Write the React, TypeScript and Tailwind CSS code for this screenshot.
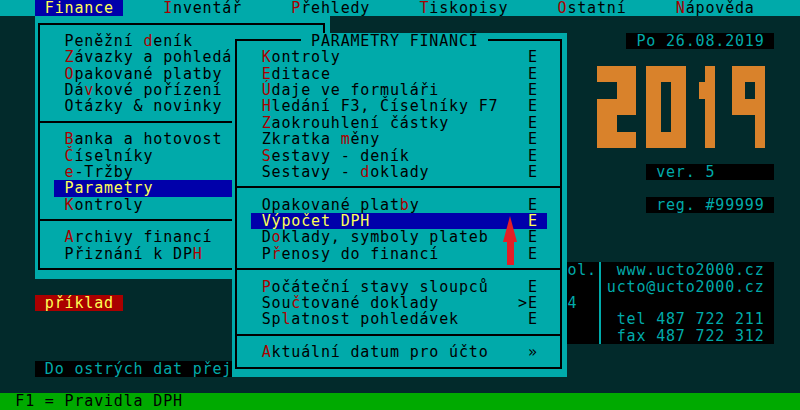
import React from "react";

type Fg = "k" | "r" | "y" | "c";
type Bg = "t" | "d" | "k" | "b" | "r" | "g";
type Cell = { ch: string; fg: Fg; bg: Bg };

const fgCls: Record<Fg, string> = {
  k: "text-black",
  r: "text-[#aa0000]",
  y: "text-[#ffff55]",
  c: "text-[#00aaaa]",
};

const bgCls: Record<Bg, string> = {
  t: "bg-[#00aaaa]",
  d: "bg-[#022a2b]",
  k: "bg-black",
  b: "bg-[#0000aa]",
  r: "bg-[#aa0000]",
  g: "bg-[#00aa00]",
};

const COLS = 80;
const ROWS = 25;

function makeScreen() {
  const s: Cell[][] = [];
  for (let r = 0; r < ROWS; r++) {
    const row: Cell[] = [];
    for (let c = 0; c < COLS; c++) {
      const bg: Bg = r === 0 ? "t" : r === 24 ? "g" : "d";
      row.push({ ch: " ", fg: "k", bg });
    }
    s.push(row);
  }

  const fill = (r0: number, r1: number, c0: number, c1: number, bg: Bg) => {
    for (let r = r0; r <= r1; r++)
      for (let c = c0; c <= c1; c++) s[r][c] = { ch: " ", fg: "k", bg };
  };

  // "~x" marks a hotkey letter, drawn in red unless hot is off
  const put = (r: number, c: number, str: string, fg: Fg, hot = true) => {
    let col = c;
    let mark = false;
    for (const ch of Array.from(str)) {
      if (ch === "~") {
        mark = true;
        continue;
      }
      s[r][col] = { ch, fg: mark && hot ? "r" : fg, bg: s[r][col].bg };
      mark = false;
      col++;
    }
  };

  const set = (r: number, c: number, ch: string, fg: Fg) => {
    s[r][c] = { ch, fg, bg: s[r][c].bg };
  };

  const box = (r0: number, r1: number, c0: number, c1: number) => {
    for (let c = c0 + 1; c < c1; c++) {
      set(r0, c, "─", "k");
      set(r1, c, "─", "k");
    }
    for (let r = r0 + 1; r < r1; r++) {
      set(r, c0, "│", "k");
      set(r, c1, "│", "k");
    }
    set(r0, c0, "┌", "k");
    set(r0, c1, "┐", "k");
    set(r1, c0, "└", "k");
    set(r1, c1, "┘", "k");
  };

  const sep = (r: number, c0: number, c1: number) => {
    set(r, c0, "├", "k");
    for (let c = c0 + 1; c < c1; c++) set(r, c, "─", "k");
    set(r, c1, "┤", "k");
  };

  // menu bar
  fill(0, 0, 3, 11, "b");
  put(0, 4, "Finance", "y", false);
  put(0, 16, "~Inventář", "k");
  put(0, 29, "~Přehledy", "k");
  put(0, 42, "~Tiskopisy", "k");
  put(0, 56, "~Ostatní", "k");
  put(0, 68, "~Nápověda", "k");

  // right side panels
  fill(2, 2, 63, 77, "k");
  put(2, 64, "Po 26.08.2019", "c");
  fill(10, 10, 65, 77, "k");
  put(10, 66, "ver. 5", "c");
  fill(12, 12, 65, 77, "k");
  put(12, 66, "reg. #99999", "c");
  fill(16, 20, 48, 77, "k");
  put(16, 55, "škol.", "c");
  put(18, 57, "4", "c");
  for (let r = 16; r <= 20; r++) set(r, 60, "│", "c");
  put(16, 62, "www.ucto2000.cz", "c");
  put(17, 61, "ucto@ucto2000.cz", "c");
  put(19, 62, "tel 487 722 211", "c");
  put(20, 62, "fax 487 722 312", "c");

  // left side labels
  fill(18, 18, 3, 11, "r");
  put(18, 4, "příklad", "y");
  fill(22, 22, 3, 40, "k");
  put(22, 4, "Do ostrých dat přejít", "c");

  // status line
  put(24, 1, "F1 = Pravidla DPH", "k");

  // Finance dropdown
  fill(1, 16, 3, 32, "t");
  box(1, 16, 3, 32);
  put(2, 6, "Peněžní ~deník", "k");
  put(3, 6, "~Závazky a pohledávky", "k");
  put(4, 6, "~Opakované platby", "k");
  put(5, 6, "Dá~vkové pořízení", "k");
  put(6, 6, "Otázky & novinky", "k");
  sep(7, 3, 32);
  put(8, 6, "~Banka a hotovost", "k");
  put(9, 6, "~Číselníky", "k");
  put(10, 6, "~e-Tržby", "k");
  fill(11, 11, 5, 22, "b");
  put(11, 6, "Parametry", "y", false);
  put(12, 6, "~Kontroly", "k");
  sep(13, 3, 32);
  put(14, 6, "~Archivy financí", "k");
  put(15, 6, "Přiznání k DP~H", "k");

  // Parametry submenu
  fill(2, 22, 23, 56, "t");
  box(2, 22, 23, 56);
  put(2, 30, " PARAMETRY FINANCÍ ", "k");
  const items: [number, string, string][] = [
    [3, "~Kontroly", "E"],
    [4, "~Editace", "E"],
    [5, "~Údaje ve formuláři", "E"],
    [6, "~Hledání F3, Číselníky F7", "E"],
    [7, "~Zaokrouhlení částky", "E"],
    [8, "Zkratka ~měny", "E"],
    [9, "~Sestavy - deník", "E"],
    [10, "Sestavy - ~doklady", "E"],
    [12, "Opakované plat~by", "E"],
    [14, "D~oklady, symboly plateb", "E"],
    [15, "P~řenosy do financí", "E"],
    [17, "~Počáteční stavy sloupců", "E"],
    [18, "Sou~čtované doklady", ">E"],
    [19, "Sp~latnost pohledávek", "E"],
    [21, "~Aktuální datum pro účto", "»"],
  ];
  for (const [r, label, key] of items) {
    put(r, 26, label, "k");
    put(r, 54 - Array.from(key).length, key, "k");
  }
  sep(11, 23, 56);
  sep(16, 23, 56);
  sep(20, 23, 56);
  fill(13, 13, 25, 54, "b");
  put(13, 26, "Výpočet DPH", "y", false);
  put(13, 53, "E", "y", false);

  return s;
}

const screen = makeScreen();

// which arms a frame glyph has
const frame: Record<string, { l?: 1; r?: 1; u?: 1; d?: 1 }> = {
  "─": { l: 1, r: 1 },
  "│": { u: 1, d: 1 },
  "┌": { r: 1, d: 1 },
  "┐": { l: 1, d: 1 },
  "└": { r: 1, u: 1 },
  "┘": { l: 1, u: 1 },
  "├": { u: 1, d: 1, r: 1 },
  "┤": { u: 1, d: 1, l: 1 },
};

function FrameCell({ ch }: { ch: string }) {
  const f = frame[ch];
  return (
    <span className="grid h-full w-full grid-cols-2 grid-rows-2">
      <span className={`${f.l ? "border-b-2" : ""} ${f.u ? "border-r-2" : ""}`} />
      <span className={`${f.r ? "border-b-2" : ""} ${f.u ? "-ml-[2px]" : ""}`} />
      <span className={`${f.d ? "-mt-[2px] border-r-2" : ""}`} />
      <span />
    </span>
  );
}

function Logo() {
  // block digits; one unit is half a text cell wide and half a row tall
  const rects: [number, number, number, number][] = [
    // 2
    [0, 0, 8, 2],
    [4, 2, 4, 2],
    [0, 4, 8, 2],
    [0, 6, 4, 2],
    [0, 8, 8, 2],
    // 0
    [10, 0, 8, 2],
    [10, 2, 3, 6],
    [15, 2, 3, 6],
    [10, 8, 8, 2],
    // 1
    [22, 0, 2, 10],
    [20.6, 2, 1.4, 2],
    // 9
    [27.4, 0, 6.6, 2],
    [27.4, 2, 2.6, 2],
    [32, 2, 2, 8],
    [27.4, 4, 6.6, 2],
  ];
  return (
    <svg
      className="pointer-events-none absolute left-[596.6px] top-[65.6px] h-[82px] w-[177.5px]"
      viewBox="0 0 36 10"
      preserveAspectRatio="none"
    >
      {rects.map(([x, y, w, h], i) => (
        <rect key={i} x={x} y={y} width={w} height={h} fill="#d9822b" shapeRendering="crispEdges" />
      ))}
    </svg>
  );
}

function Arrow() {
  return (
    <svg className="pointer-events-none absolute left-[500px] top-[214px] h-[54px] w-[20px]" viewBox="0 0 20 54">
      <polygon points="10,2 17,28 14,28 14,51 7,51 7,28 3,28" fill="#e41e26" />
    </svg>
  );
}

export default function App() {
  return (
    <div className="relative h-[410px] w-[800px] overflow-hidden bg-[#022a2b] font-['DejaVu_Sans_Mono',monospace] text-[15px] leading-[16.4px]">
      {screen.map((row, r) => (
        <div key={r} className={`flex h-[16.4px] pl-[5px] ${bgCls[row[0].bg]}`}>
          {row.map((cell, c) => (
            <span
              key={c}
              className={`flex h-full w-[9.86px] shrink-0 justify-center whitespace-pre ${bgCls[cell.bg]} ${fgCls[cell.fg]}`}
            >
              {frame[cell.ch] ? <FrameCell ch={cell.ch} /> : cell.ch}
            </span>
          ))}
        </div>
      ))}
      <Logo />
      <Arrow />
    </div>
  );
}
